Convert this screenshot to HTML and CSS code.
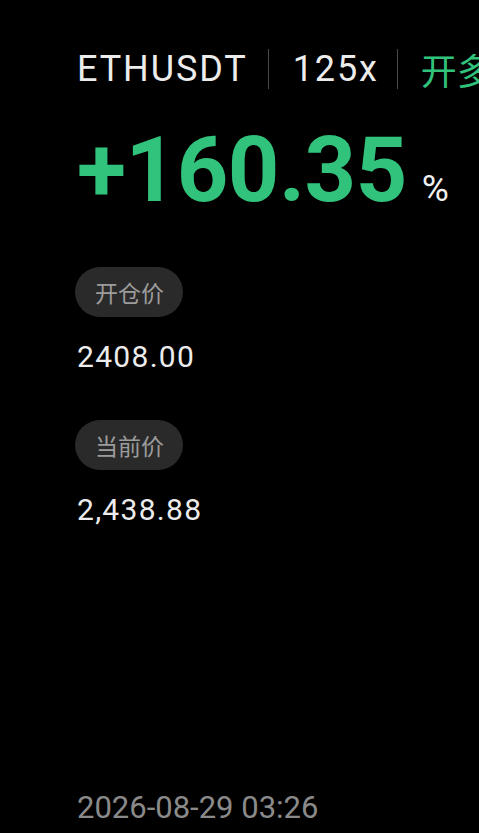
FILE: index.html
```
<!DOCTYPE html>
<html lang="zh-CN">
<head>
<meta charset="utf-8">
<link rel="stylesheet" href="styles.css">
</head>
<body>
<main class="page">
  <header class="head">
    <span class="sym">ETHUSDT</span>
    <span class="sep"></span>
    <span class="lev">125x</span>
    <span class="sep last"></span>
    <span class="side">开多</span>
  </header>
  <div class="pnl">
    <span class="pnl-num">+160.35</span>
    <span class="pnl-unit">%</span>
  </div>
  <section class="field">
    <div class="pill">开仓价</div>
    <div class="val">2408.00</div>
  </section>
  <section class="field second">
    <div class="pill">当前价</div>
    <div class="val">2,438.88</div>
  </section>
  <footer class="date">2026-08-29 03:26</footer>
</main>
</body>
</html>
```
FILE: styles.css
```
html, body {
  margin: 0;
  padding: 0;
  background: #000;
}
body {
  font-family: Roboto, "Noto Sans CJK SC", sans-serif;
  color: #ececec;
  overflow: hidden;
}
.page {
  box-sizing: border-box;
  height: 833px;
  padding: 49px 0 7px 77px;
  display: flex;
  flex-direction: column;
  white-space: nowrap;
  overflow: hidden;
}
.head {
  display: flex;
  align-items: center;
  font-size: 36px;
  line-height: 40px;
  height: 40px;
}
.sym, .lev {
  letter-spacing: 1.9px;
}
.sep {
  width: 1px;
  height: 40px;
  background: #4a4a4a;
  margin: 0 24px 0 20px;
  flex: none;
}
.sep.last {
  margin: 0 23px 0 18px;
}
.side {
  color: #31c27c;
  font-family: "Noto Sans CJK SC", sans-serif;
}
.pnl {
  margin-top: 37px;
  display: flex;
  align-items: baseline;
  line-height: 90px;
}
.pnl-num {
  font-size: 90px;
  font-weight: 700;
  color: #31c27c;
  letter-spacing: -0.5px;
}
.pnl-unit {
  font-size: 37px;
  margin-left: 15px;
  color: #f0f0f0;
}
.field {
  margin-top: 33px;
  display: flex;
  flex-direction: column;
  align-items: flex-start;
}
.field.second {
  margin-top: 45px;
}
.pill {
  margin-left: -2px;
  height: 50px;
  line-height: 50px;
  padding: 0 19px 0 20px;
  border-radius: 25px;
  background: #2a2a2a;
  color: #9c9c9c;
  font-size: 23px;
  font-family: "Noto Sans CJK SC", sans-serif;
}
.val {
  margin-top: 22px;
  font-size: 30px;
  line-height: 36px;
  color: #ececec;
  letter-spacing: 1.3px;
}
.date {
  margin-top: auto;
  font-size: 31px;
  line-height: 36px;
  color: #8a8a8a;
}
```
